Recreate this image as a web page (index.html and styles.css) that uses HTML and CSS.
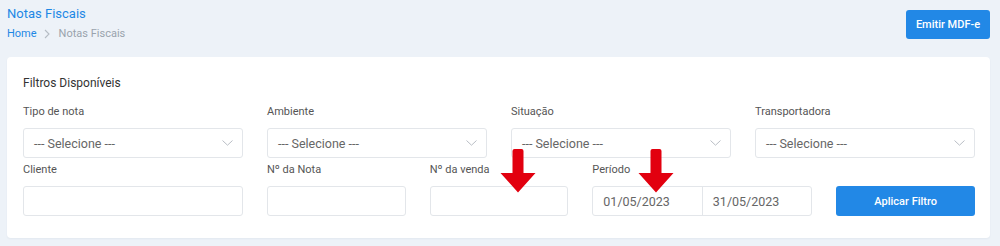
FILE: index.html
```html
<!DOCTYPE html>
<html lang="pt-BR">
<head>
<meta charset="utf-8">
<title>Notas Fiscais</title>
<link rel="stylesheet" href="styles.css">
</head>
<body>
<div class="page">
  <header class="topbar">
    <div class="heading">
      <h1 class="title">Notas Fiscais</h1>
      <nav class="crumbs">
        <a class="crumb-link">Home</a>
        <svg class="crumb-sep" width="8" height="10" viewBox="0 0 8 10"><path d="M2 1 L6 5 L2 9" fill="none" stroke="#b5bcc4" stroke-width="1.1"/></svg>
        <span class="crumb-current">Notas Fiscais</span>
      </nav>
    </div>
    <button class="btn btn-top">Emitir MDF-e</button>
  </header>

  <section class="card">
    <h2 class="card-title">Filtros Disponíveis</h2>
    <div class="filters">
      <div class="field span3">
        <label class="lbl">Tipo de nota</label>
        <div class="select"><span>--- Selecione ---</span><svg class="chev" width="11" height="6" viewBox="0 0 11 6"><path d="M0.5 0.5 L5.5 5.2 L10.5 0.5" fill="none" stroke="#b9bec5" stroke-width="1"/></svg></div>
      </div>
      <div class="field span3">
        <label class="lbl">Ambiente</label>
        <div class="select"><span>--- Selecione ---</span><svg class="chev" width="11" height="6" viewBox="0 0 11 6"><path d="M0.5 0.5 L5.5 5.2 L10.5 0.5" fill="none" stroke="#b9bec5" stroke-width="1"/></svg></div>
      </div>
      <div class="field span3">
        <label class="lbl">Situação</label>
        <div class="select"><span>--- Selecione ---</span><svg class="chev" width="11" height="6" viewBox="0 0 11 6"><path d="M0.5 0.5 L5.5 5.2 L10.5 0.5" fill="none" stroke="#b9bec5" stroke-width="1"/></svg></div>
      </div>
      <div class="field span3">
        <label class="lbl">Transportadora</label>
        <div class="select"><span>--- Selecione ---</span><svg class="chev" width="11" height="6" viewBox="0 0 11 6"><path d="M0.5 0.5 L5.5 5.2 L10.5 0.5" fill="none" stroke="#b9bec5" stroke-width="1"/></svg></div>
      </div>

      <div class="field span3">
        <label class="lbl">Cliente</label>
        <div class="input"></div>
      </div>
      <div class="field span2">
        <label class="lbl">Nº da Nota</label>
        <div class="input"></div>
      </div>
      <div class="field span2">
        <label class="lbl">Nº da venda</label>
        <div class="input"></div>
      </div>
      <div class="field span3">
        <label class="lbl">Período</label>
        <div class="range">
          <div class="range-part">01/05/2023</div>
          <div class="range-part">31/05/2023</div>
        </div>
      </div>
      <div class="field span2 field-btn">
        <button class="btn btn-apply">Aplicar Filtro</button>
      </div>
    </div>
  </section>

  <svg class="arrow arrow-1" width="36" height="44" viewBox="0 0 36 44"><path d="M12.5 2 Q12.5 0 14.5 0 H21.5 Q23.5 0 23.5 2 V24 H35.5 L18 43.5 L0.5 24 H12.5 Z" fill="#e2000f"/></svg>
  <svg class="arrow arrow-2" width="36" height="44" viewBox="0 0 36 44"><path d="M12.5 2 Q12.5 0 14.5 0 H21.5 Q23.5 0 23.5 2 V24 H35.5 L18 43.5 L0.5 24 H12.5 Z" fill="#e2000f"/></svg>
</div>
</body>
</html>
```

FILE: styles.css
```css
* { box-sizing: border-box; }
html, body {
  margin: 0;
  padding: 0;
  background: #edf2f8;
  font-family: Roboto, "Liberation Sans", Arial, sans-serif;
  color: #555;
}
.page {
  position: relative;
  width: 1000px;
  height: 246px;
  overflow: hidden;
}
.topbar {
  display: flex;
  justify-content: space-between;
  align-items: flex-start;
  padding: 5px 10px 0 7px;
}
.heading { height: 37px; }
.title {
  margin: 0;
  font-size: 13px;
  line-height: 18px;
  font-weight: 400;
  color: #1e88e5;
}
.crumbs {
  margin-top: 3px;
  display: flex;
  align-items: center;
  font-size: 11px;
  line-height: 16px;
}
.crumb-link { color: #1e88e5; }
.crumb-sep { margin: 0 8px 0 6px; }
.crumb-current { color: #99a3ad; }
.btn {
  border: none;
  border-radius: 3px;
  background: #2288e6;
  color: #fff;
  font-family: inherit;
  font-weight: 500;
  cursor: pointer;
  padding: 0;
}
.btn-top {
  margin-top: 5px;
  width: 84px;
  height: 29px;
  font-size: 11px;
}
.card {
  margin: 15px 10px 0 7px;
  background: #fff;
  border-radius: 4px;
  padding: 16px 15px 22px 16px;
  box-shadow: 0 1px 2px rgba(40, 60, 90, 0.05);
}
.card-title {
  margin: 0 0 10px;
  font-size: 12px;
  line-height: 20px;
  font-weight: 400;
  color: #333;
}
.filters {
  display: grid;
  grid-template-columns: repeat(12, 1fr);
  column-gap: 24px;
  row-gap: 3px;
}
.span3 { grid-column: span 3; }
.span2 { grid-column: span 2; }
.field { display: flex; flex-direction: column; }
.field-btn { justify-content: flex-end; }
.lbl {
  font-size: 11px;
  line-height: 18px;
  color: #555;
  margin-bottom: 7px;
}
.select, .input, .range {
  height: 30px;
  border: 1px solid #e3e6ea;
  border-radius: 3px;
  background: #fff;
}
.select {
  display: flex;
  align-items: center;
  justify-content: space-between;
  padding: 0 9px 0 10px;
  font-size: 12.5px;
  color: #666;
}
.chev { display: block; }
.range {
  display: flex;
}
.range-part {
  flex: 1;
  display: flex;
  align-items: center;
  padding-left: 10px;
  font-size: 12.5px;
  color: #666;
}
.range-part + .range-part { border-left: 1px solid #e3e6ea; }
.btn-apply {
  height: 30px;
  width: 100%;
  font-size: 11px;
}
.arrow { position: absolute; }
.arrow-1 { left: 500px; top: 149px; }
.arrow-2 { left: 638px; top: 149px; }
```
